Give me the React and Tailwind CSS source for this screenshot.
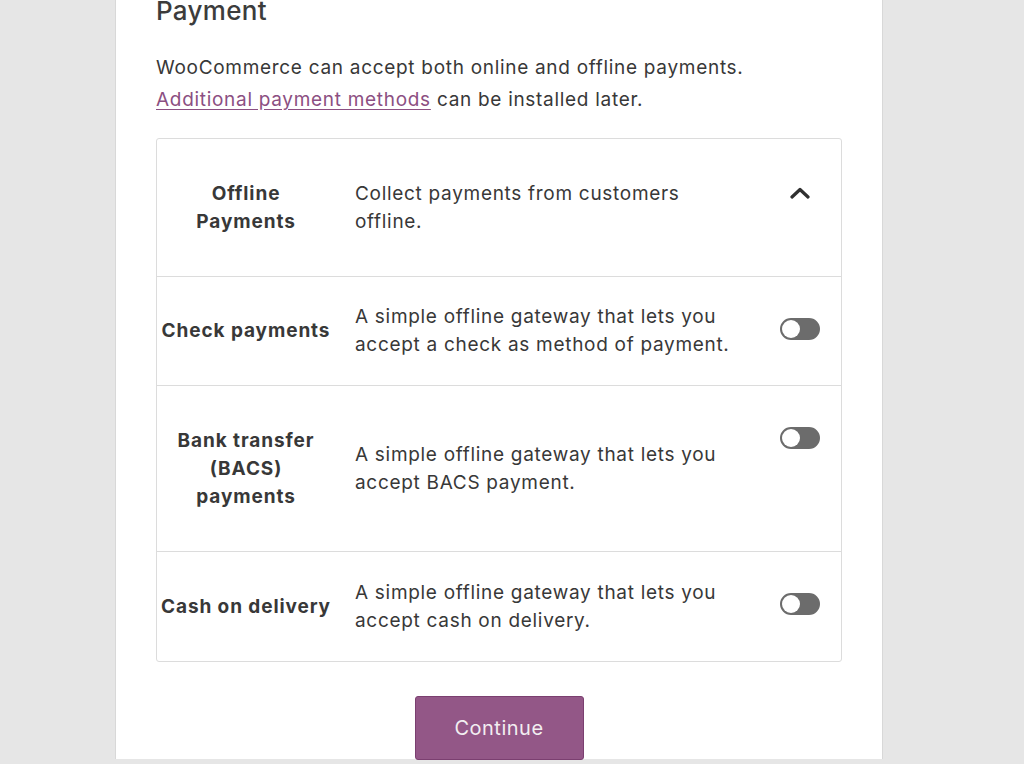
import React from "react";

function Toggle() {
  return (
    <div className="relative w-[40px] h-[22px] rounded-full bg-[#6c6c6c] border-2 border-[#6c6c6c]">
      <div className="absolute left-0 top-0 w-[18px] h-[18px] rounded-full bg-white" />
    </div>
  );
}

function Chevron() {
  return (
    <svg width="20" height="12" viewBox="0 0 20 12" fill="none">
      <path d="M2 10 L10 2.5 L18 10" stroke="#2f2f2f" strokeWidth="3.2" strokeLinecap="round" strokeLinejoin="round" />
    </svg>
  );
}

function Row({ h, title, desc, right, rightTop, rightPad, last }) {
  return (
    <div
      className={`flex ${last ? "" : "border-b border-[#dcdcdc]"}`}
      style={{ height: h }}
    >
      <div className="w-[178px] shrink-0 flex items-center justify-center text-center font-bold text-[#383838] leading-[28px] tracking-[0.9px]">
        {title}
      </div>
      <div className="w-[405px] shrink-0 pl-[20px] flex items-center text-[#383838] leading-[28px] tracking-[0.7px]">
        {desc}
      </div>
      <div className="flex-1 flex justify-end" style={{ paddingTop: rightTop, paddingRight: rightPad }}>
        {right}
      </div>
    </div>
  );
}

export default function App() {
  return (
    <div
      className="w-[1024px] h-[764px] overflow-hidden bg-[#e6e6e6] pl-[115px]"
      style={{ fontFamily: "Inter, 'Open Sans', sans-serif" }}
    >
      <div className="w-[768px] h-full bg-white border-x border-[#d8d8d8] pl-[40px] pr-[40px] text-[19px]">
        <h1 className="text-[26px] font-medium text-[#3c3c3c] leading-[32px] mt-[-5px] tracking-[0.3px]">Payment</h1>
        <p className="mt-[25px] text-[#383838] leading-[32px] tracking-[0.7px]">
          WooCommerce can accept both online and offline payments.
          <br />
          <a className="text-[#8c4f82] underline underline-offset-[3px]">Additional payment methods</a> can be installed later.
        </p>
        <div className="mt-[22px] w-[686px] border border-[#dcdcdc] rounded-[3px]">
          <Row
            h={138}
            title={<span>Offline<br />Payments</span>}
            desc="Collect payments from customers offline."
            right={<Chevron />}
            rightTop={48}
            rightPad={31}
          />
          <Row
            h={109}
            title="Check payments"
            desc="A simple offline gateway that lets you accept a check as method of payment."
            right={<Toggle />}
            rightTop={41}
            rightPad={21}
          />
          <Row
            h={166}
            title={<span>Bank transfer<br />(BACS)<br />payments</span>}
            desc="A simple offline gateway that lets you accept BACS payment."
            right={<Toggle />}
            rightTop={41}
            rightPad={21}
          />
          <Row
            h={109}
            title="Cash on delivery"
            desc="A simple offline gateway that lets you accept cash on delivery."
            right={<Toggle />}
            rightTop={41}
            rightPad={21}
            last
          />
        </div>
        <div className="flex justify-center mt-[34px]">
          <button className="w-[169px] h-[64px] rounded-[3px] bg-[#935787] border border-[#7b3f70] text-[#f2eef1] text-[20px] tracking-[0.5px]">
            Continue
          </button>
        </div>
      </div>
    </div>
  );
}
